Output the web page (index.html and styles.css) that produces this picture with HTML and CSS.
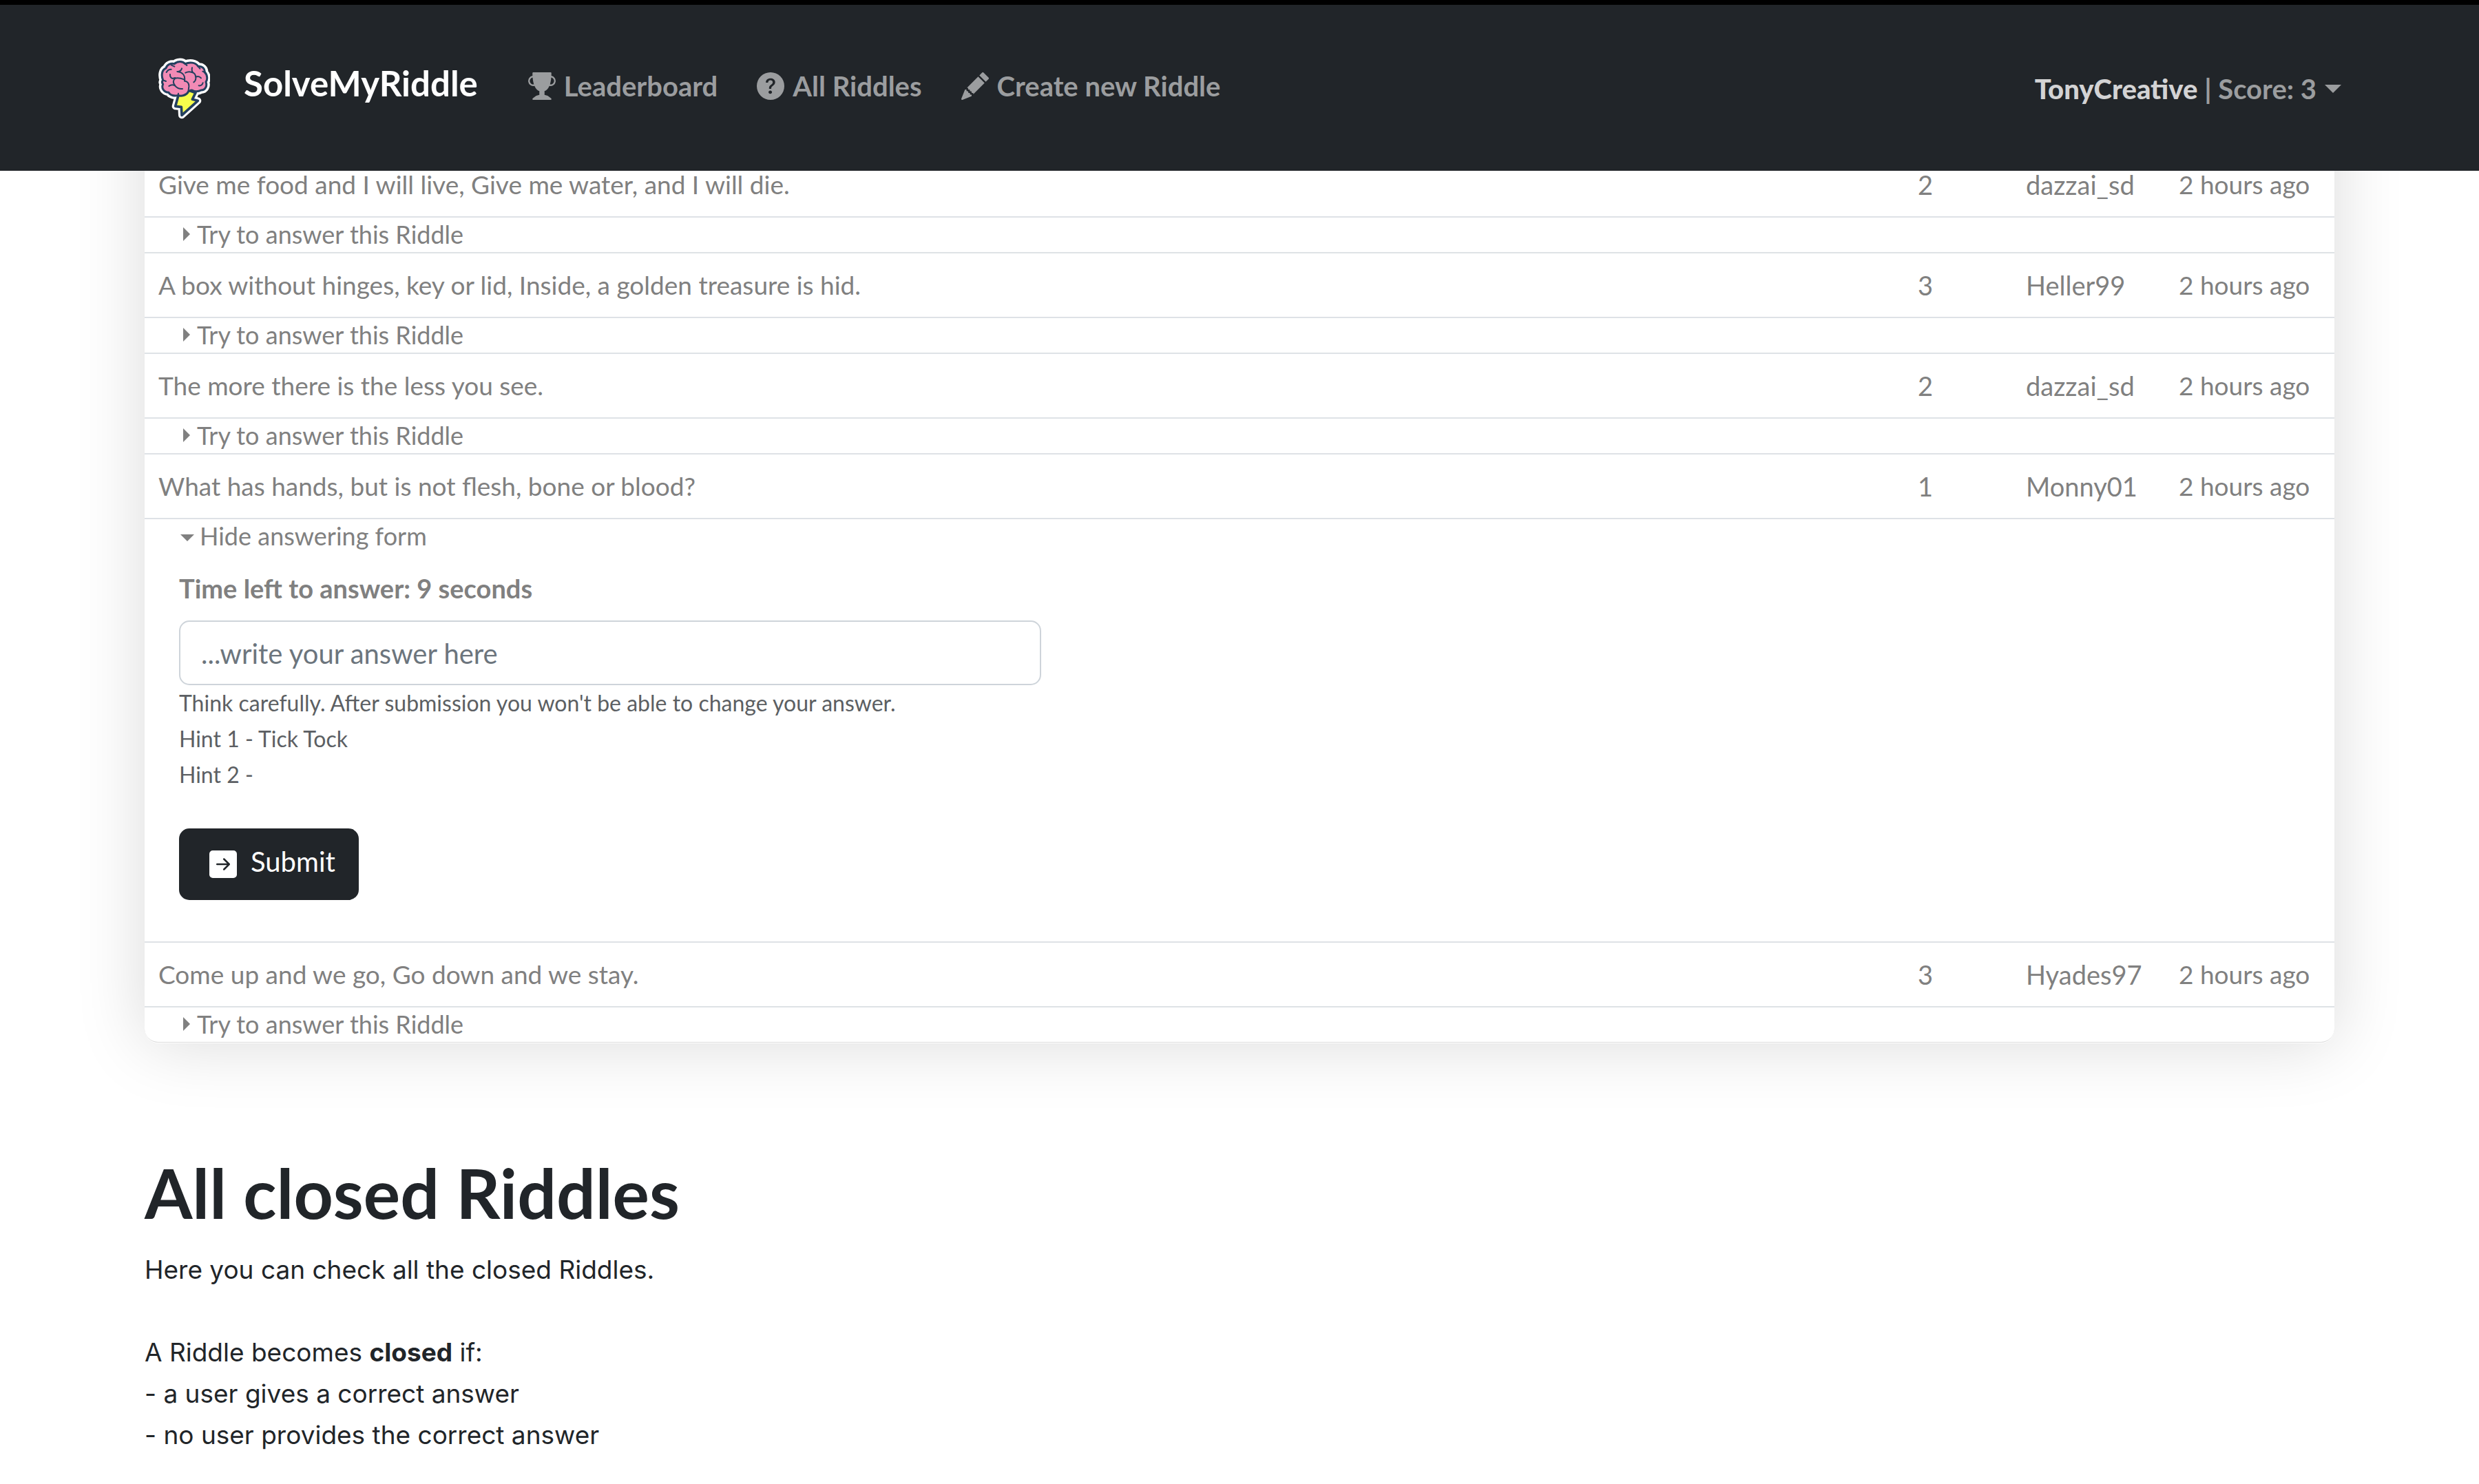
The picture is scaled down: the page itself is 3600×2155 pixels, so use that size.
FILE: index.html
```html
<!DOCTYPE html>
<html lang="en">
<head>
<meta charset="utf-8">
<meta name="viewport" content="width=device-width, initial-scale=1">
<title>SolveMyRiddle</title>
<link rel="stylesheet" href="styles.css">
</head>
<body>
<header class="navbar">
  <a class="brand" href="#">
    <svg class="logo" viewBox="87 72 228 270" aria-hidden="true">
      <g stroke-linejoin="round" stroke-linecap="round">
        <g fill="#fff" stroke="#fff" stroke-width="30">
          <path d="M110 172C101 150 106 126 123 120C128 103 146 97 160 101C173 88 196 88 207 101C225 92 252 94 263 112C281 110 293 122 292 138C304 148 305 170 297 180C304 198 294 216 276 216C263 223 247 222 240 218C236 214 225 217 220 223C213 238 189 244 176 238C160 243 141 238 135 226C113 224 102 206 110 190C105 184 105 178 110 172Z"/>
          <path d="M178 235L164 286L190 289L192 325L262 262L238 256L252 227L215 214Z"/>
        </g>
        <path d="M178 235L164 286L190 289L192 325L262 262L238 256L252 227L215 214Z" fill="#f6fd4c" stroke="#24405f" stroke-width="11"/>
        <path d="M110 172C101 150 106 126 123 120C128 103 146 97 160 101C173 88 196 88 207 101C225 92 252 94 263 112C281 110 293 122 292 138C304 148 305 170 297 180C304 198 294 216 276 216C263 223 247 222 240 218C236 214 225 217 220 223C213 238 189 244 176 238C160 243 141 238 135 226C113 224 102 206 110 190C105 184 105 178 110 172Z" fill="#f28ab5" stroke="#24405f" stroke-width="9"/>
        <path d="M125 138Q132 124 146 125M146 106L160 113M141 147Q140 162 152 165L163 162M176 135Q188 134 192 121M172 135Q210 140 204 176M204 170Q178 160 163 164Q148 180 163 196M136 198Q150 188 163 197Q175 212 195 210M110 172L123 177M176 238L177 230M204 176Q224 178 223 200L220 223M207 101L214 108M208 140Q222 132 236 138Q254 142 253 165Q252 176 244 181M237 118Q234 132 240 138M254 158Q266 152 276 163M263 112L271 122M292 138L283 134M266 196Q280 198 284 184" fill="none" stroke="#24405f" stroke-width="6"/>
      </g>
    </svg>
    <span>SolveMyRiddle</span>
  </a>
  <nav class="links">
    <a class="link" href="#">
      <svg class="icon" viewBox="0 0 16 16" aria-hidden="true"><path d="M2.500.5A.5.5 0 0 1 3 0h10a.5.5 0 0 1 .5.5c0 .538-.012 1.050-.034 1.536a3 3 0 1 1-1.133 5.890c-.79 1.865-1.878 2.777-2.833 3.011v2.173l1.425.356c.194.048.377.135.537.255L13.300 15.100a.5.5 0 0 1-.3.9H3a.5.5 0 0 1-.3-.9l1.838-1.379c.16-.12.343-.207.537-.255L6.500 13.110v-2.173c-.955-.234-2.043-1.146-2.833-3.012a3 3 0 1 1-1.132-5.890A33.076 33.076 0 0 1 2.500.5zm.099 2.540a2 2 0 0 0 .72 3.935c-.333-1.050-.588-2.346-.72-3.935zm10.083 3.935a2 2 0 0 0 .72-3.935c-.133 1.590-.388 2.885-.72 3.935z"/></svg>
      <span>Leaderboard</span>
    </a>
    <a class="link" href="#">
      <svg class="icon" viewBox="0 0 16 16" aria-hidden="true"><path d="M16 8A8 8 0 1 1 0 8a8 8 0 0 1 16 0zM5.496 6.033h.825c.138 0 .248-.113.266-.25.09-.656.54-1.134 1.342-1.134.686 0 1.314.343 1.314 1.168 0 .635-.374.927-.965 1.371-.673.489-1.206 1.060-1.168 1.987l.003.217a.25.25 0 0 0 .25.246h.811a.25.25 0 0 0 .25-.25v-.105c0-.718.273-.927 1.010-1.486.609-.463 1.244-.977 1.244-2.056 0-1.511-1.276-2.241-2.673-2.241-1.267 0-2.655.590-2.750 2.286a.237.237 0 0 0 .241.247zm2.325 6.443c.61 0 1.029-.394 1.029-.927 0-.552-.42-.94-1.029-.94-.584 0-1.009.388-1.009.94 0 .533.425.927 1.010.927z"/></svg>
      <span>All Riddles</span>
    </a>
    <a class="link" href="#">
      <svg class="icon" viewBox="0 0 16 16" aria-hidden="true"><path d="M12.854.146a.5.5 0 0 0-.707 0L10.500 1.793 14.207 5.500l1.647-1.646a.5.5 0 0 0 0-.708l-3-3zm.646 6.061L9.793 2.500 3.293 9H3.500a.5.5 0 0 1 .5.5v.5h.5a.5.5 0 0 1 .5.5v.5h.5a.5.5 0 0 1 .5.5v.5h.5a.5.5 0 0 1 .5.5v.207l6.500-6.500zm-7.468 7.468A.5.5 0 0 1 6 13.500V13h-.5a.5.5 0 0 1-.5-.5V12h-.5a.5.5 0 0 1-.5-.5V11h-.5a.5.5 0 0 1-.5-.5V10h-.5a.499.499 0 0 1-.175-.032l-.179.178a.5.5 0 0 0-.11.168l-2 5a.5.5 0 0 0 .65.65l5-2a.5.5 0 0 0 .168-.11l.178-.178z"/></svg>
      <span>Create new Riddle</span>
    </a>
  </nav>
  <button class="account" type="button"><span><strong class="user">TonyCreative</strong> | Score: 3</span><span class="caret caret-down"></span></button>
</header>

<main class="page">
  <section class="card">
    <table class="riddles">
      <colgroup><col><col class="col-level"><col class="col-author"><col class="col-time"></colgroup>
      <tbody>
        <tr><td class="question">Give me food and I will live, Give me water, and I will die.</td><td>2</td><td>dazzai_sd</td><td class="time">2 hours ago</td></tr>
        <tr><td class="answer" colspan="4"><button class="toggle" type="button"><span class="caret caret-right"></span>Try to answer this Riddle</button></td></tr>
        <tr><td class="question">A box without hinges, key or lid, Inside, a golden treasure is hid.</td><td>3</td><td>Heller99</td><td class="time">2 hours ago</td></tr>
        <tr><td class="answer" colspan="4"><button class="toggle" type="button"><span class="caret caret-right"></span>Try to answer this Riddle</button></td></tr>
        <tr><td class="question">The more there is the less you see.</td><td>2</td><td>dazzai_sd</td><td class="time">2 hours ago</td></tr>
        <tr><td class="answer" colspan="4"><button class="toggle" type="button"><span class="caret caret-right"></span>Try to answer this Riddle</button></td></tr>
        <tr><td class="question">What has hands, but is not flesh, bone or blood?</td><td>1</td><td>Monny01</td><td class="time">2 hours ago</td></tr>
        <tr><td class="answer" colspan="4">
          <button class="toggle" type="button"><span class="caret caret-down"></span>Hide answering form</button>
          <form class="answer-form">
            <label class="time-left" for="answer">Time left to answer: 9 seconds</label>
            <input class="field" id="answer" type="text" placeholder="...write your answer here">
            <p class="help">Think carefully. After submission you won't be able to change your answer.</p>
            <p class="help">Hint 1 - Tick Tock</p>
            <p class="help">Hint 2 -</p>
            <button class="submit" type="button">
              <svg class="icon" viewBox="0 0 16 16" aria-hidden="true"><path d="M0 14a2 2 0 0 0 2 2h12a2 2 0 0 0 2-2V2a2 2 0 0 0-2-2H2a2 2 0 0 0-2 2v12zm4.500-6.500h5.793L8.146 5.354a.5.5 0 1 1 .708-.708l3 3a.5.5 0 0 1 0 .708l-3 3a.5.5 0 0 1-.708-.708L10.293 8.500H4.500a.5.5 0 0 1 0-1z"/></svg>
              <span class="submit-label">Submit</span>
            </button>
          </form>
        </td></tr>
        <tr><td class="question">Come up and we go, Go down and we stay.</td><td>3</td><td>Hyades97</td><td class="time">2 hours ago</td></tr>
        <tr><td class="answer" colspan="4"><button class="toggle" type="button"><span class="caret caret-right"></span>Try to answer this Riddle</button></td></tr>
      </tbody>
    </table>
  </section>

  <section class="closed">
    <h1>All closed Riddles</h1>
    <p>Here you can check all the closed Riddles.</p>
    <p class="rules">A Riddle becomes <strong>closed</strong> if:<br>- a user gives a correct answer<br>- no user provides the correct answer</p>
  </section>
</main>
</body>
</html>
```
FILE: styles.css
```css
* {
  box-sizing: border-box;
}

body {
  margin: 0;
  background: #fff;
  color: #212529;
  font: 37px/60px Inter, "Liberation Sans", sans-serif;
}

h1,
p {
  margin: 0;
}

button,
input {
  font: inherit;
  margin: 0;
}

button {
  padding: 0;
  border: 0;
  background: none;
  color: inherit;
  cursor: pointer;
}

/* Navigation bar */

.navbar {
  position: sticky;
  top: 0;
  z-index: 2;
  display: flex;
  align-items: flex-start;
  height: 248px;
  padding: 76px 200px 0 229px;
  border-top: 7px solid #000;
  background: #212529;
  color: #9b9d9f;
  font: bold 40px/60px Lato, sans-serif;
}

.brand {
  display: flex;
  align-items: flex-start;
  gap: 49px;
  color: #fff;
  font-size: 51px;
  line-height: 76px;
  text-decoration: none;
}

.logo {
  width: 76px;
  height: 90px;
}

.links {
  display: flex;
  gap: 57px;
  margin-left: 73px;
  padding-top: 12px;
}

.link {
  display: flex;
  align-items: center;
  gap: 12px;
  color: inherit;
  text-decoration: none;
}

.icon {
  width: 40px;
  height: 40px;
  fill: currentColor;
}

.account {
  display: flex;
  align-items: center;
  gap: 12px;
  margin-left: auto;
  padding-top: 16px;
}

.user {
  color: #d3d3d4;
}

.caret {
  display: inline-block;
  border: 0 solid transparent;
}

.caret-down {
  border-width: 12px 12px 0;
  border-top-color: currentColor;
}

.caret-right {
  border-width: 10px 0 10px 10px;
  border-left-color: currentColor;
}

/* Riddle table */

.page {
  padding: 0 210px 26px;
}

.card {
  margin-top: -160px;
  padding: 134px 0 1px;
  border-radius: 20px;
  background: #fff;
  box-shadow: 0 0 100px rgba(0, 0, 0, .15);
}

.riddles {
  width: 100%;
  border-spacing: 0;
  table-layout: fixed;
  color: #808080;
  font: 38px/60px Lato, sans-serif;
}

.col-level {
  width: 157px;
}

.col-author {
  width: 222px;
}

.col-time {
  width: 246px;
}

.riddles td {
  padding: 16px 20px;
  border-bottom: 2px solid #dee2e6;
}

.riddles .question,
.riddles .time {
  font-size: 37px;
}

.riddles .answer {
  padding: 0 50px;
}

.riddles tr:last-child td {
  border-bottom: 1px solid #dcdcdc;
  border-radius: 0 0 20px 20px;
}

.toggle {
  display: flex;
  align-items: center;
  gap: 10px;
  height: 50px;
  padding: 0 0 2px 6px;
  font-size: 36px;
  line-height: 48px;
}

.toggle .caret-down {
  margin: 6px -2px 0 -4px;
  border-width: 10px 10px 0;
}

.answer-form {
  display: flex;
  flex-direction: column;
  align-items: flex-start;
  padding: 20px 0 60px;
}

.time-left {
  margin-bottom: 17px;
  font-weight: bold;
}

.field {
  width: 1252px;
  max-width: 100%;
  height: 94px;
  padding: 2px 30px 0;
  border: 2px solid #ced4da;
  border-radius: 15px;
  font-size: 40px;
}

.field::placeholder {
  color: #6c757d;
  opacity: 1;
}

.help {
  color: #5c5f63;
  font-size: 32px;
  line-height: 52px;
}

.submit {
  display: flex;
  align-items: center;
  gap: 20px;
  height: 104px;
  margin-top: 52px;
  padding: 0 34px 0 44px;
  border-radius: 15px;
  background: #212529;
  color: #fff;
  font-size: 40px;
}

.submit-label {
  padding-bottom: 8px;
}

/* Closed riddles */

.closed {
  padding-top: 156px;
}

.closed h1 {
  margin-bottom: 23px;
  font: bold 100px/120px Lato, sans-serif;
}

.rules {
  padding-top: 60px;
}
```
